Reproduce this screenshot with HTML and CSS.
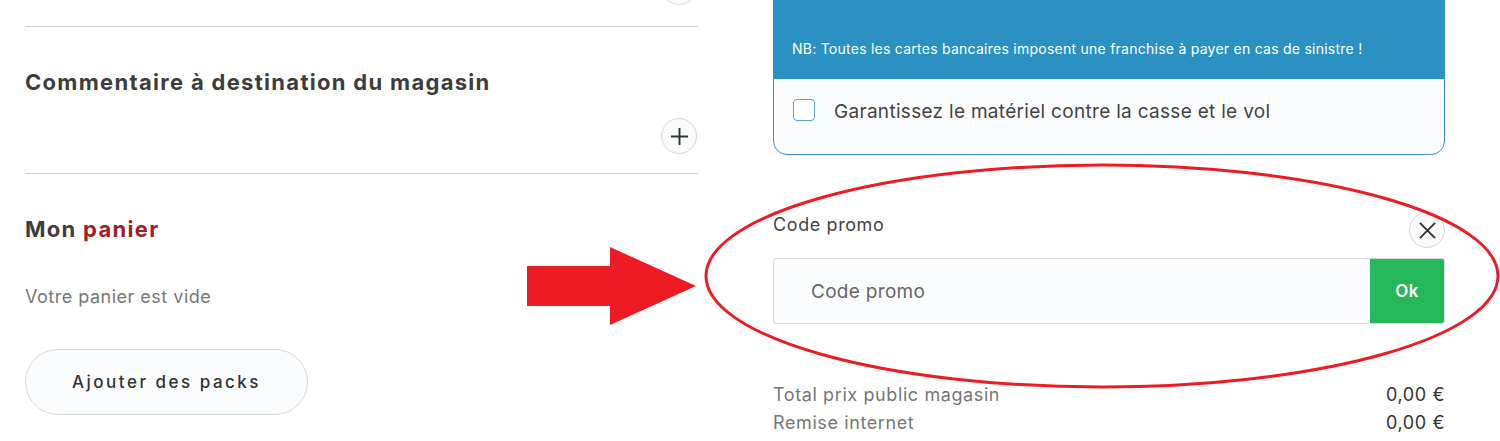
FILE: index.html
```html
<!DOCTYPE html>
<html lang="fr">
<head>
<meta charset="utf-8">
<title>Panier</title>
<link rel="stylesheet" href="styles.css">
</head>
<body>
<div class="page">
  <div class="col-left">
    <section class="acc prev">
      <div class="acc-foot"><button class="round" aria-label="Ouvrir"><svg viewBox="0 0 20 20" width="20" height="20"><path d="M10 1v18M1 10h18" stroke="#333" stroke-width="2" fill="none"/></svg></button></div>
    </section>
    <section class="acc comment">
      <h2 class="title">Commentaire à destination du magasin</h2>
      <div class="acc-foot"><button class="round" aria-label="Ouvrir"><svg viewBox="0 0 20 20" width="20" height="20"><path d="M10 1v18M1 10h18" stroke="#333" stroke-width="2" fill="none"/></svg></button></div>
    </section>
    <section class="cart">
      <h2 class="title">Mon <span class="accent">panier</span></h2>
      <p class="empty">Votre panier est vide</p>
      <button class="pill">Ajouter des packs</button>
    </section>
  </div>
  <div class="col-right">
    <div class="insure">
      <div class="insure-head">
        <h3 class="insure-title">Voyagez serein</h3>
        <p class="nb">NB: Toutes les cartes bancaires imposent une franchise à payer en cas de sinistre !</p>
      </div>
      <label class="insure-row">
        <span class="check"></span>
        <span class="insure-text">Garantissez le matériel contre la casse et le vol</span>
      </label>
    </div>
    <div class="promo">
      <div class="promo-head">
        <span class="promo-label">Code promo</span>
        <button class="round" aria-label="Fermer"><svg viewBox="0 0 20 20" width="20" height="20"><path d="M2 2l16 16M18 2L2 18" stroke="#333" stroke-width="2" fill="none"/></svg></button>
      </div>
      <div class="promo-field">
        <span class="promo-input">Code promo</span>
        <button class="ok">Ok</button>
      </div>
    </div>
    <div class="totals">
      <div class="trow"><span>Total prix public magasin</span><span class="val">0,00 €</span></div>
      <div class="trow"><span>Remise internet</span><span class="val">0,00 €</span></div>
    </div>
  </div>
</div>
<svg class="annot" width="1500" height="441" viewBox="0 0 1500 441">
  <polygon points="527,266 610,266 610,247 696,286 610,325 610,306 527,306" fill="#ed1c24"/>
  <ellipse cx="1102" cy="276" rx="396" ry="111" fill="none" stroke="#ed1c24" stroke-width="3"/>
</svg>
</body>
</html>
```
FILE: styles.css
```css
* { box-sizing: border-box; }
html, body { margin: 0; padding: 0; }
body {
  width: 1500px;
  height: 441px;
  overflow: hidden;
  background: #fff;
  font-family: "Inter", "Noto Sans", sans-serif;
  color: #3d3d3d;
  position: relative;
}
.page {
  display: flex;
  align-items: flex-start;
  gap: 75px;
  padding: 0 55px 0 25px;
  margin-top: -50px;
}
.col-left { width: 673px; flex: none; }
.col-right { width: 672px; flex: none; }

.acc { border-bottom: 1px solid #cfcfcf; }
.prev { padding: 19px 0 21px; }
.comment { padding: 40px 0 19px; }
.acc-foot { display: flex; justify-content: flex-end; }
.comment .acc-foot { margin-top: 21px; }
.round {
  width: 36px; height: 36px;
  border-radius: 50%;
  border: 1px solid #d6d6d6;
  background: #f8fafc;
  display: flex; align-items: center; justify-content: center;
  padding: 0;
  margin-right: 1px;
}
.round svg { width: 19px; height: 19px; }
.title {
  margin: 0;
  font-size: 22px;
  line-height: 30px;
  font-weight: 700;
  color: #3d3d3d;
  letter-spacing: 1.3px;
}
.accent { color: #a3202b; }
.cart { padding-top: 40px; }
.empty {
  margin: 40px 0 0;
  font-size: 18px;
  line-height: 26px;
  color: #777;
  letter-spacing: 0.5px;
}
.pill {
  margin-top: 39px;
  width: 283px; height: 66px;
  border-radius: 33px;
  border: 1px solid #d9d9d9;
  background: #fafbfc;
  font-family: inherit;
  font-size: 17px;
  letter-spacing: 2.5px;
  color: #333;
  font-weight: 500;
}

.insure {
  border: 1px solid #3d8fc3;
  border-radius: 0 0 14px 14px;
  overflow: hidden;
  background: #fbfcfd;
}
.insure-head {
  background: #2b91c2;
  padding: 21px 18px 20px;
  color: #fff;
}
.insure-title {
  margin: 0;
  font-size: 24px;
  line-height: 30px;
  font-weight: 700;
}
.nb {
  margin: 37px 0 0;
  font-size: 14px;
  line-height: 20px;
  letter-spacing: 0.25px;
}
.insure-row {
  display: flex;
  align-items: flex-start;
  gap: 19px;
  padding: 20px 19px 28px;
}
.check {
  width: 22px; height: 22px;
  border: 1.5px solid #5b9fcf;
  border-radius: 4px;
  background: #fff;
  flex: none;
}
.insure-text {
  font-size: 19px;
  line-height: 28px;
  margin-top: -1px;
  color: #444;
  letter-spacing: 0.3px;
}

.promo { margin-top: 57px; }
.promo-head {
  display: flex;
  justify-content: space-between;
  align-items: flex-start;
}
.promo-label { font-size: 18px; line-height: 26px; color: #444; letter-spacing: 0.6px; }
.promo-head .round { margin-right: 0; }
.promo-field {
  margin-top: 10px;
  display: flex;
  height: 66px;
  border: 1px solid #d9d9d9;
  border-radius: 3px;
  background: #fbfcfd;
  overflow: hidden;
}
.promo-input {
  flex: 1;
  display: flex;
  align-items: center;
  padding-left: 37px;
  font-size: 19px;
  color: #666;
  letter-spacing: 0.3px;
}
.ok {
  width: 74px;
  border: 0;
  background: #25b85b;
  color: #fff;
  font-family: inherit;
  font-size: 17px;
  font-weight: 600;
  letter-spacing: 0.5px;
}

.totals { margin-top: 57px; }
.trow {
  display: flex;
  justify-content: space-between;
  font-size: 18px;
  line-height: 28px;
  color: #777;
  letter-spacing: 0.6px;
}
.trow .val { color: #333; }

.annot { position: absolute; left: 0; top: 0; pointer-events: none; }
```
